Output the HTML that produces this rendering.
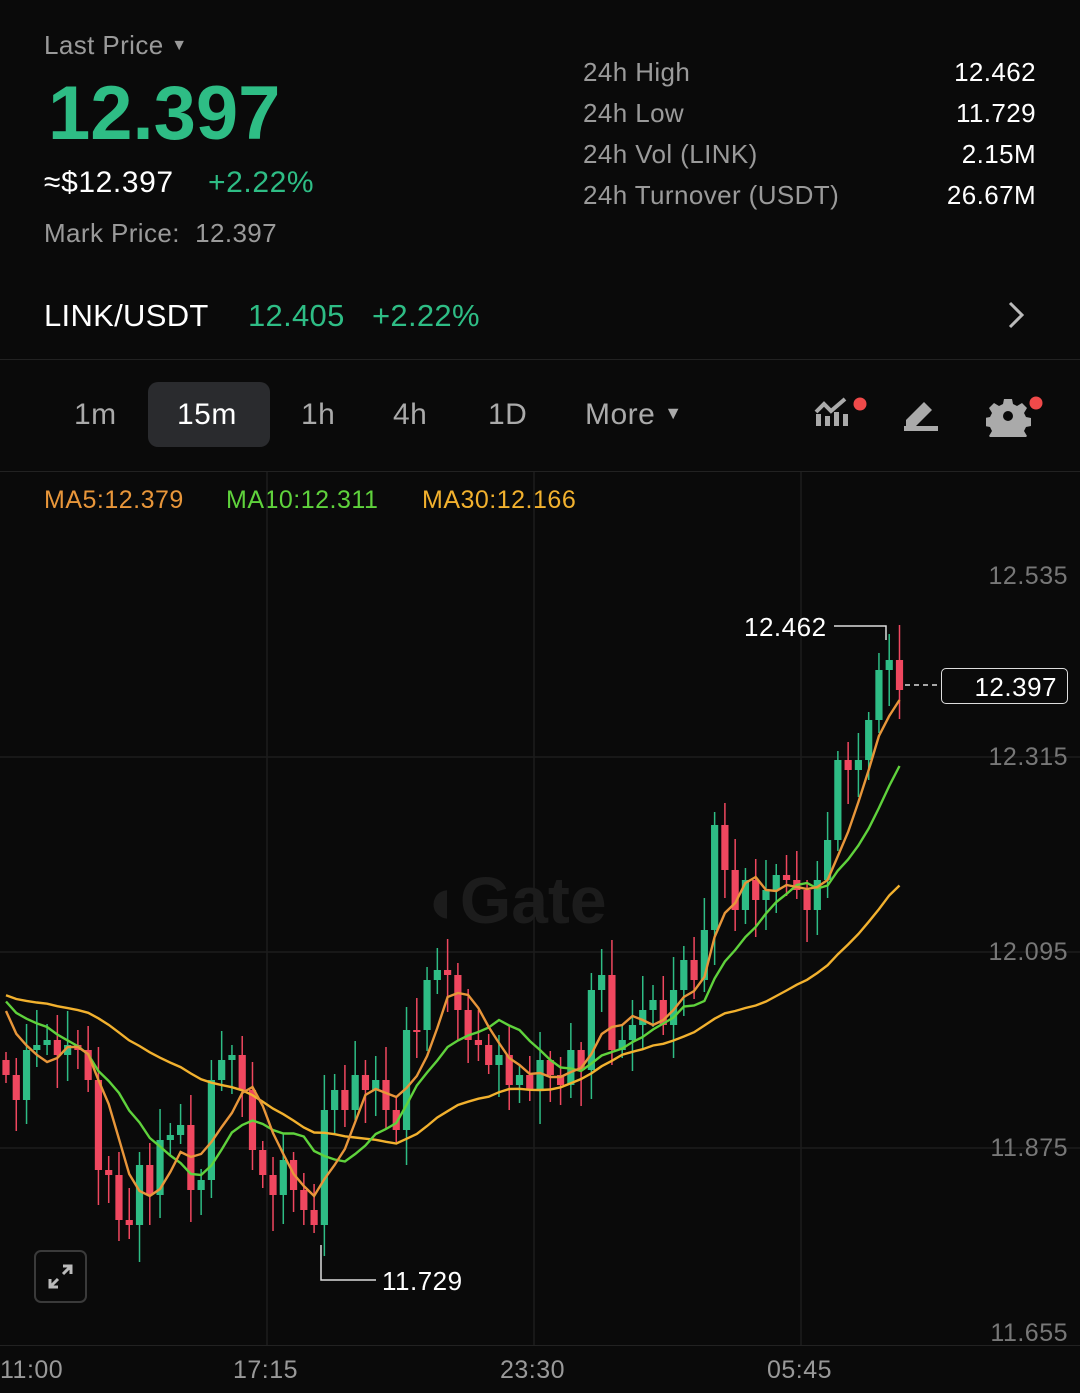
<!DOCTYPE html>
<html><head><meta charset="utf-8">
<style>
*{margin:0;padding:0;box-sizing:border-box}
body{width:1080px;height:1393px;background:#0a0a0a;font-family:"Liberation Sans",sans-serif;position:relative;overflow:hidden;color:#fff}
.a{position:absolute;white-space:nowrap}
.g{color:#999}
.grn{color:#2ebd85}
.lbl{font-size:26px;color:#9a9a9a;letter-spacing:0.4px}
.val{font-size:26px;color:#fff;text-align:right;right:44px;letter-spacing:0.4px}
.tab{font-size:30px;color:#aaa;top:398px;letter-spacing:0.5px}
</style></head><body>
<div class="a lbl" style="left:44px;top:30px">Last Price <span style="font-size:16px;position:relative;top:-4px">▼</span></div>
<div class="a grn" style="left:48px;top:70px;font-size:76px;font-weight:bold;letter-spacing:0px">12.397</div>
<div class="a" style="left:44px;top:166px;font-size:30px;letter-spacing:0.6px">≈$12.397</div>
<div class="a grn" style="left:208px;top:166px;font-size:30px;letter-spacing:0.6px">+2.22%</div>
<div class="a lbl" style="left:44px;top:218px">Mark Price:&nbsp; 12.397</div>

<div class="a lbl" style="left:583px;top:57px">24h High</div>
<div class="a lbl" style="left:583px;top:98px">24h Low</div>
<div class="a lbl" style="left:583px;top:139px">24h Vol (LINK)</div>
<div class="a lbl" style="left:583px;top:180px">24h Turnover (USDT)</div>
<div class="a val" style="top:57px">12.462</div>
<div class="a val" style="top:98px">11.729</div>
<div class="a val" style="top:139px">2.15M</div>
<div class="a val" style="top:180px">26.67M</div>

<div class="a" style="left:44px;top:298px;font-size:31px;letter-spacing:0.3px">LINK/USDT</div>
<div class="a grn" style="left:248px;top:298px;font-size:31px;letter-spacing:0.3px">12.405</div>
<div class="a grn" style="left:372px;top:298px;font-size:31px;letter-spacing:0.3px">+2.22%</div>
<svg class="a" style="left:1004px;top:300px" width="24" height="30"><path d="M6 3l12 12-12 12" stroke="#bbb" stroke-width="3" fill="none"/></svg>
<div class="a" style="left:0;top:359px;width:1080px;height:1px;background:#222"></div>

<div class="a" style="left:148px;top:382px;width:122px;height:65px;background:#2a2b2e;border-radius:10px"></div>
<div class="a tab" style="left:74px">1m</div>
<div class="a tab" style="left:177px;color:#fff">15m</div>
<div class="a tab" style="left:301px">1h</div>
<div class="a tab" style="left:393px">4h</div>
<div class="a tab" style="left:488px">1D</div>
<div class="a tab" style="left:585px">More <span style="font-size:18px;position:relative;top:-5px">▼</span></div>
<svg class="a" style="left:812px;top:392px" width="60" height="45">
<g fill="#aaa"><rect x="4" y="22" width="5" height="12"/><rect x="13" y="24" width="5" height="10"/><rect x="22" y="20" width="5" height="14"/><rect x="31" y="22" width="5" height="12"/></g>
<path d="M4 20l8-8 7 7 14-12" stroke="#aaa" stroke-width="4" fill="none"/>
<circle cx="48" cy="12" r="6.5" fill="#f04a4a"/></svg>
<svg class="a" style="left:900px;top:396px" width="42" height="38">
<path d="M6 24l18-18 8 8-18 18H6z" fill="#aaa"/><rect x="4" y="30" width="34" height="5" fill="#aaa"/></svg>
<svg class="a" style="left:986px;top:392px" width="60" height="45">
<g transform="translate(22,24)"><path d="M-4-17h8l1 5 4 2 5-3 5 5-3 5 2 4 5 1v8l-5 1-2 4 3 5-5 5-5-3-4 2-1 5h-8l-1-5-4-2-5 3-5-5 3-5-2-4-5-1v-8l5-1 2-4-3-5 5-5 5 3 4-2z" fill="#aaa"/><circle r="5" fill="#0a0a0a"/></g>
<circle cx="50" cy="11" r="6.5" fill="#f04a4a"/></svg>
<div class="a" style="left:0;top:471px;width:1080px;height:1px;background:#222"></div>

<div class="a" style="left:44px;top:486px;font-size:25px;color:#e8963a;letter-spacing:0.5px">MA5:12.379</div>
<div class="a" style="left:226px;top:486px;font-size:25px;color:#5fd23c;letter-spacing:0.5px">MA10:12.311</div>
<div class="a" style="left:422px;top:486px;font-size:25px;color:#f2b12e;letter-spacing:0.5px">MA30:12.166</div>

<svg class="a" id="ch" style="left:0;top:0" width="1080" height="1393"></svg>

<div class="a" style="left:420px;top:862px;font-size:66px;font-weight:bold;color:#1c1c1c">◖Gate</div>
<div class="a" style="left:34px;top:1250px;width:53px;height:53px;border:2px solid #3a3a3a;border-radius:7px"></div>
<svg class="a" style="left:44px;top:1260px" width="33" height="33"><path d="M19 6h8v8M27 6l-8 8M14 27H6v-8M6 27l8-8" stroke="#bbb" stroke-width="3" fill="none"/></svg>

<div class="a" style="left:0;top:1345px;width:1080px;height:1px;background:#222"></div>
<div class="a g" style="left:0;top:1356px;font-size:25px;letter-spacing:0.5px">11:00</div>
<div class="a g" style="left:233px;top:1356px;font-size:25px;letter-spacing:0.5px">17:15</div>
<div class="a g" style="left:500px;top:1356px;font-size:25px;letter-spacing:0.5px">23:30</div>
<div class="a g" style="left:767px;top:1356px;font-size:25px;letter-spacing:0.5px">05:45</div>

<div class="a" style="right:12px;top:562px;font-size:25px;color:#777;letter-spacing:0.5px">12.535</div>
<div class="a" style="right:12px;top:743px;font-size:25px;color:#777;letter-spacing:0.5px">12.315</div>
<div class="a" style="right:12px;top:938px;font-size:25px;color:#777;letter-spacing:0.5px">12.095</div>
<div class="a" style="right:12px;top:1134px;font-size:25px;color:#777;letter-spacing:0.5px">11.875</div>
<div class="a" style="right:12px;top:1319px;font-size:25px;color:#777;letter-spacing:0.5px">11.655</div>

<div class="a" style="left:744px;top:612px;font-size:26px;letter-spacing:0.5px">12.462</div>
<div class="a" style="left:382px;top:1266px;font-size:26px;letter-spacing:0.5px">11.729</div>
<div class="a" style="left:941px;top:668px;width:127px;height:36px;border:1.5px solid #ddd;border-radius:5px;font-size:26px;text-align:right;padding:3px 10px 0 0;letter-spacing:0.5px">12.397</div>

<script>
var c=[1075,1100,1050,1045,1040,1055,1045,1050,1080,1170,1175,1220,1225,1165,1195,1140,1135,1125,1190,1180,1080,1060,1055,1090,1150,1175,1195,1160,1190,1210,1225,1110,1090,1110,1075,1090,1080,1110,1130,1030,1030,980,970,975,1010,1040,1045,1065,1055,1085,1075,1090,1060,1075,1085,1050,1070,990,975,1050,1040,1025,1010,1000,1025,990,960,980,930,825,870,910,880,900,890,875,880,890,910,880,840,760,770,760,720,670,660,690];
var s='';
[267,534,801].forEach(function(x){s+='<line x1="'+x+'" y1="472" x2="'+x+'" y2="1345" stroke="#1c1c1c" stroke-width="1.5"/>';});
[757,952,1148].forEach(function(y){s+='<line x1="0" y1="'+y+'" x2="1080" y2="'+y+'" stroke="#1c1c1c" stroke-width="1.5"/>';});
var sp=10.27,x0=6,prev=1060;
function X(i){return x0+i*sp;}
for(var i=0;i<c.length;i++){
 var o=prev,cl=c[i],x=X(i);
 var up=cl<o,col=up?'#2ebd85':'#f0475f';
 var hi=Math.min(o,cl)-(8+((i*37)%28)),lo=Math.max(o,cl)+(8+((i*53)%30));
 s+='<line x1="'+x+'" y1="'+hi+'" x2="'+x+'" y2="'+lo+'" stroke="'+col+'" stroke-width="1.5"/>';
 var t=Math.min(o,cl),h=Math.max(Math.abs(o-cl),2);
 s+='<rect x="'+(x-3.6)+'" y="'+t+'" width="7.2" height="'+h+'" fill="'+col+'"/>';
 prev=cl;
}
function ma(n,col){
 var p='',hist=[];for(var k=0;k<30;k++)hist.push(1000+(k%5)*6-20);
 var arr=hist.concat(c);
 for(var i=0;i<c.length;i++){var j=i+30,sum=0;for(var k=0;k<n;k++)sum+=arr[j-k];p+=(i?'L':'M')+X(i).toFixed(1)+' '+(sum/n).toFixed(1);}
 s+='<path d="'+p+'" stroke="'+col+'" stroke-width="2.4" fill="none"/>';
}
ma(30,'#f2b12e');ma(10,'#5fd23c');ma(5,'#e8963a');
s+='<polyline points="834,626 886,626 886,640" stroke="#ddd" stroke-width="1.5" fill="none"/>';
s+='<polyline points="321,1245 321,1280 376,1280" stroke="#ddd" stroke-width="1.5" fill="none"/>';
s+='<line x1="905" y1="685" x2="940" y2="685" stroke="#ddd" stroke-width="1.5" stroke-dasharray="5 4"/>';
document.getElementById('ch').innerHTML=s;
</script>
</body></html>
